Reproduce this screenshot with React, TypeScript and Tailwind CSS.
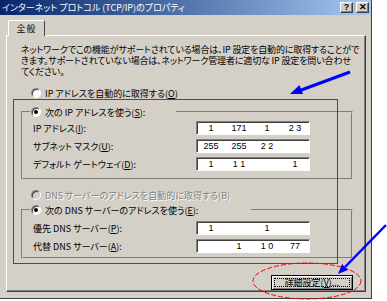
import React from 'react'

const jp = "font-['Noto_Sans_CJK_JP','Noto_Sans',sans-serif] [font-feature-settings:'palt']"

function K({ c }: { c: string }) {
  return <span className="underline underline-offset-1">{c}</span>
}

function Radio({ on, disabled }: { on?: boolean; disabled?: boolean }) {
  return (
    <span
      className={`inline-flex w-[10px] h-[10px] shrink-0 items-center justify-center rounded-full border border-t-[#808080] border-l-[#808080] border-b-white border-r-white shadow-[inset_1px_1px_0_#404040] ${
        disabled ? 'bg-[#d4d0c8]' : 'bg-white'
      }`}
    >
      {on && <span className="w-[4px] h-[4px] rounded-full bg-black" />}
    </span>
  )
}

function TitleBtn({ children }: { children: React.ReactNode }) {
  return (
    <span className="flex w-[13px] h-[11px] items-center justify-center bg-[#d4d0c8] border border-t-white border-l-white border-r-[#404040] border-b-[#404040] shadow-[inset_-1px_-1px_0_#808080] text-[9px] font-bold leading-none text-black font-['Liberation_Sans',sans-serif]">
      {children}
    </span>
  )
}

function IpBox({ parts }: { parts: string[] }) {
  return (
    <div className="grid grid-cols-4 w-[114px] h-[14px] bg-white border border-t-[#808080] border-l-[#808080] border-b-white border-r-white shadow-[inset_1px_1px_0_#404040] items-center">
      {parts.map((p, i) => (
        <span key={i} className="text-center text-[9px] leading-none font-['Liberation_Sans',sans-serif]">
          {p}
        </span>
      ))}
    </div>
  )
}

function Row({ label, parts }: { label: React.ReactNode; parts: string[] }) {
  return (
    <div className="flex items-center h-[14px]">
      <span className="w-[163px] whitespace-nowrap leading-none">{label}</span>
      <IpBox parts={parts} />
    </div>
  )
}

function Group({ legend, legendW, children, pt, pb }: { legend: React.ReactNode; legendW: string; children: React.ReactNode; pt: string; pb: string }) {
  return (
    <fieldset className="border-2 [border-style:groove] border-[#d4d0c8]">
      <legend className={`ml-[7px] h-[12px] flex items-center gap-[4px] px-[1px] ${legendW}`}>
        <Radio on />
        <span className="whitespace-nowrap leading-none">{legend}</span>
      </legend>
      <div className={`pl-[10px] flex flex-col gap-[4px] ${pt} ${pb}`}>{children}</div>
    </fieldset>
  )
}

export default function App() {
  return (
    <div className={`relative w-[387px] h-[301px] bg-white overflow-hidden text-[9px] text-black ${jp}`}>
      <div className="w-[372px] h-[299px] bg-[#d4d0c8] border-r border-b border-[#404040] flex flex-col">
        {/* title bar */}
        <div className="h-[15px] shrink-0 bg-gradient-to-r from-[#0a246a] to-[#a6caf0] flex items-center pl-[2px] pr-[2px] gap-[1px]">
          <span className="flex-1 text-white text-[9px] leading-none whitespace-nowrap">インターネット プロトコル (TCP/IP)のプロパティ</span>
          <TitleBtn>?</TitleBtn>
          <span className="w-[1px]" />
          <TitleBtn>✕</TitleBtn>
        </div>

        <div className="flex-1 pl-[6px] pt-[5px]">
          {/* tab */}
          <div className="relative z-10 ml-[2px] -mb-[1px] w-[37px] h-[16px] bg-[#d4d0c8] border-t border-l border-white border-r border-r-[#404040] rounded-t-[2px] flex items-center justify-center leading-none tracking-[1px]">
            全般
          </div>

          {/* panel */}
          <div className="w-[360px] h-[257px] border border-t-white border-l-white border-r-[#404040] border-b-[#404040] shadow-[inset_-1px_-1px_0_#808080] pl-[14px] pr-[12px] pt-[8px] flex flex-col">
            <div className="flex flex-col whitespace-nowrap tracking-[-0.15px]">
              <span className="h-[11px] leading-[11px]">ネットワークでこの機能がサポートされている場合は、IP 設定を自動的に取得することがで</span>
              <span className="h-[11px] leading-[11px]">きます。サポートされていない場合は、ネットワーク管理者に適切な IP 設定を問い合わせ</span>
              <span className="h-[11px] leading-[11px]">てください。</span>
            </div>

            <div className="mt-[10px] ml-[10px] h-[12px] flex items-center gap-[4px]">
              <Radio />
              <span className="leading-none">
                IP アドレスを自動的に取得する(<K c="O" />)
              </span>
            </div>

            <div className="mt-[7px]">
              <Group
                legendW="w-[146px]"
                pt="pt-[3px]"
                pb="pb-[7px]"
                legend={
                  <>
                    次の IP アドレスを使う(<K c="S" />):
                  </>
                }
              >
                <Row label={<>IP アドレス(<K c="I" />):</>} parts={['1', '171', '1', '2 3']} />
                <Row label={<>サブネット マスク(<K c="U" />):</>} parts={['255', '255', '2 2', '']} />
                <Row label={<>デフォルト ゲートウェイ(<K c="D" />):</>} parts={['1', '1 1', '', '1']} />
              </Group>
            </div>

            <div className="mt-[9px] ml-[10px] h-[12px] flex items-center gap-[4px]">
              <Radio disabled />
              <span className="leading-none text-[#808080] [text-shadow:1px_1px_0_#fff]">
                DNS サーバーのアドレスを自動的に取得する(B)
              </span>
            </div>

            <div className="mt-[3px]">
              <Group
                legendW="w-[221px]"
                pt="pt-[5px]"
                pb="pb-[4px]"
                legend={
                  <>
                    次の DNS サーバーのアドレスを使う(<K c="E" />):
                  </>
                }
              >
                <Row label={<>優先 DNS サーバー(<K c="P" />):</>} parts={['1', '', '1', '']} />
                <Row label={<>代替 DNS サーバー(<K c="A" />):</>} parts={['', '1', '1 0', '77']} />
              </Group>
            </div>

            <div className="mt-[16px] self-end">
              <button className="w-[82px] h-[15px] bg-[#d4d0c8] border border-black shadow-[inset_1px_1px_0_#fff,inset_-1px_-1px_0_#808080] flex items-center justify-center p-[2px]">
                <span className="w-full h-full border border-dotted border-black flex items-center justify-center leading-none text-[9px]">
                  詳細設定(<K c="V" />)...
                </span>
              </button>
            </div>
          </div>
        </div>
      </div>

      {/* annotations drawn over the screenshot */}
      <svg className="absolute inset-0 pointer-events-none" width="387" height="301" viewBox="0 0 387 301">
        <rect x="13.5" y="99.5" width="324" height="164" fill="none" stroke="#ff0000" strokeWidth="1" />
        <ellipse cx="307" cy="281" rx="54" ry="18" fill="none" stroke="#ff0000" strokeWidth="1" strokeDasharray="5 2" />
        <line x1="350" y1="72" x2="300" y2="90.5" stroke="#0000ff" strokeWidth="3" />
        <polygon points="290,94 303,94 299.5,85" fill="#0000ff" />
        <line x1="386" y1="225" x2="345" y2="267" stroke="#0000ff" strokeWidth="2.5" />
        <polygon points="338,274 348,270 342,264" fill="#0000ff" />
      </svg>
    </div>
  )
}
